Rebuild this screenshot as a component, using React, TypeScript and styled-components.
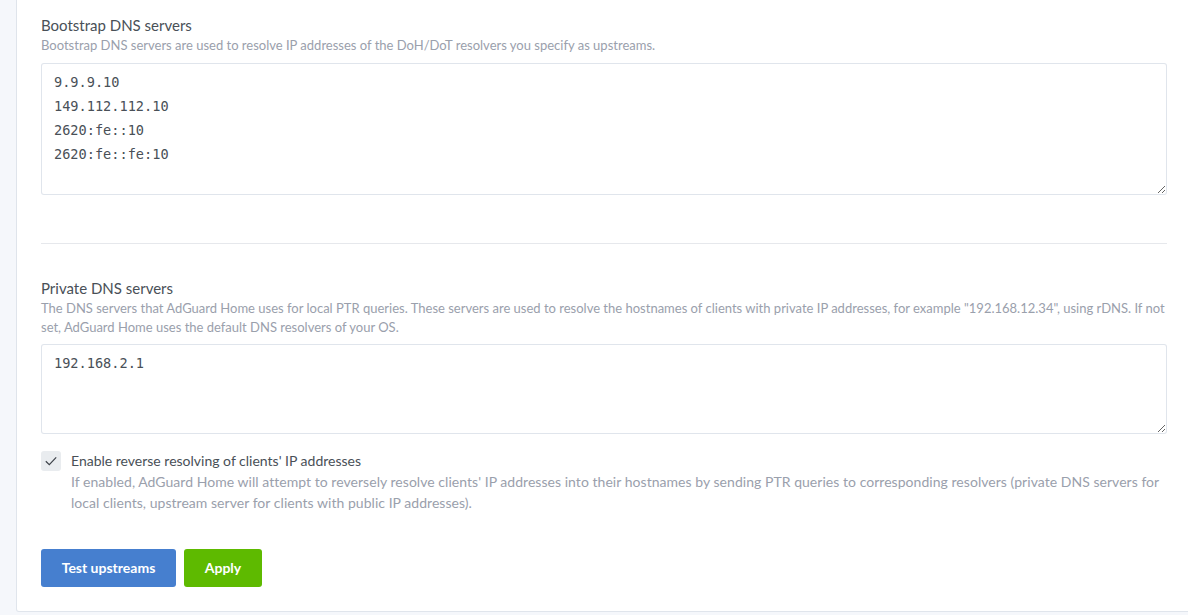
import React from "react";
import styled, { createGlobalStyle } from "styled-components";

const Global = createGlobalStyle`
  html, body { margin: 0; padding: 0; }
  body {
    background: #f5f7fb;
    font-family: "Lato", "Open Sans", sans-serif;
    overflow: hidden;
    width: 1188px;
    height: 615px;
  }
`;

const Page = styled.div`
  padding-left: 16px;
  height: 615px;
  overflow: hidden;
`;

const Card = styled.div`
  width: 1176px;
  height: 612px;
  box-sizing: border-box;
  background: #fff;
  border: 1px solid rgba(0, 40, 100, 0.12);
  border-top: none;
  border-radius: 0 0 3px 3px;
  padding: 14px 24px 0 24px;
`;

const Field = styled.div`
  display: flex;
  flex-direction: column;
`;

const Title = styled.div`
  font-size: 15px;
  line-height: 22px;
  color: #495057;
`;

const Desc = styled.div<{ $gap: number }>`
  font-size: 13px;
  line-height: 19.5px;
  color: #9aa0ac;
  margin-bottom: ${(p) => p.$gap}px;
`;

const Area = styled.textarea<{ $h: number }>`
  display: block;
  width: 100%;
  height: ${(p) => p.$h}px;
  box-sizing: border-box;
  border: 1px solid rgba(0, 40, 100, 0.12);
  border-radius: 3px;
  padding: 6px 12px;
  font-family: "DejaVu Sans Mono", monospace;
  font-size: 13.6px;
  line-height: 24px;
  color: #495057;
  resize: vertical;
  outline: none;
  background: #fff;
`;

const Divider = styled.hr`
  border: none;
  border-top: 1px solid #e6e8ec;
  margin: 48px 0 33px 0;
`;

const CheckRow = styled.label`
  display: flex;
  gap: 10px;
  margin-top: 17px;
`;

const Box = styled.span`
  flex: none;
  width: 20px;
  height: 20px;
  border-radius: 3px;
  background: #e9ecef;
  display: flex;
  align-items: center;
  justify-content: center;
`;

const CheckText = styled.div`
  display: flex;
  flex-direction: column;
`;

const CheckTitle = styled.div`
  font-size: 14px;
  line-height: 20px;
  color: #495057;
`;

const CheckDesc = styled.div`
  font-size: 14px;
  line-height: 21px;
  color: #9aa0ac;
  letter-spacing: 0.04px;
`;

const Buttons = styled.div`
  display: flex;
  gap: 8px;
  margin-top: 36px;
`;

const Button = styled.button<{ $bg: string; $w: number }>`
  height: 38px;
  width: ${(p) => p.$w}px;
  border: none;
  border-radius: 3px;
  background: ${(p) => p.$bg};
  color: #fff;
  font-family: "Lato", "Open Sans", sans-serif;
  font-weight: 700;
  font-size: 14px;
  cursor: pointer;
`;

export default function App() {
  return (
    <>
      <Global />
      <Page>
        <Card>
          <Field>
            <Title>Bootstrap DNS servers</Title>
            <Desc $gap={7}>
              Bootstrap DNS servers are used to resolve IP addresses of the DoH/DoT resolvers you specify as upstreams.
            </Desc>
            <Area
              $h={132}
              defaultValue={"9.9.9.10\n149.112.112.10\n2620:fe::10\n2620:fe::fe:10"}
            />
          </Field>
          <Divider />
          <Field>
            <Title>Private DNS servers</Title>
            <Desc $gap={6}>
              The DNS servers that AdGuard Home uses for local PTR queries. These servers are used to resolve the hostnames of clients with private IP addresses, for example "192.168.12.34", using rDNS. If not set, AdGuard Home uses the default DNS resolvers of your OS.
            </Desc>
            <Area $h={90} defaultValue={"192.168.2.1"} />
          </Field>
          <CheckRow>
            <Box>
              <svg width="14" height="14" viewBox="0 0 14 14">
                <path d="M1.8 7.2 L5.3 10.6 L12.2 3.4" fill="none" stroke="#3d4249" strokeWidth="1.2" />
              </svg>
            </Box>
            <CheckText>
              <CheckTitle>Enable reverse resolving of clients' IP addresses</CheckTitle>
              <CheckDesc>
                If enabled, AdGuard Home will attempt to reversely resolve clients' IP addresses into their hostnames by sending PTR queries to corresponding resolvers (private DNS servers for local clients, upstream server for clients with public IP addresses).
              </CheckDesc>
            </CheckText>
          </CheckRow>
          <Buttons>
            <Button $bg="#467fcf" $w={135}>Test upstreams</Button>
            <Button $bg="#5eba00" $w={78}>Apply</Button>
          </Buttons>
        </Card>
      </Page>
    </>
  );
}
